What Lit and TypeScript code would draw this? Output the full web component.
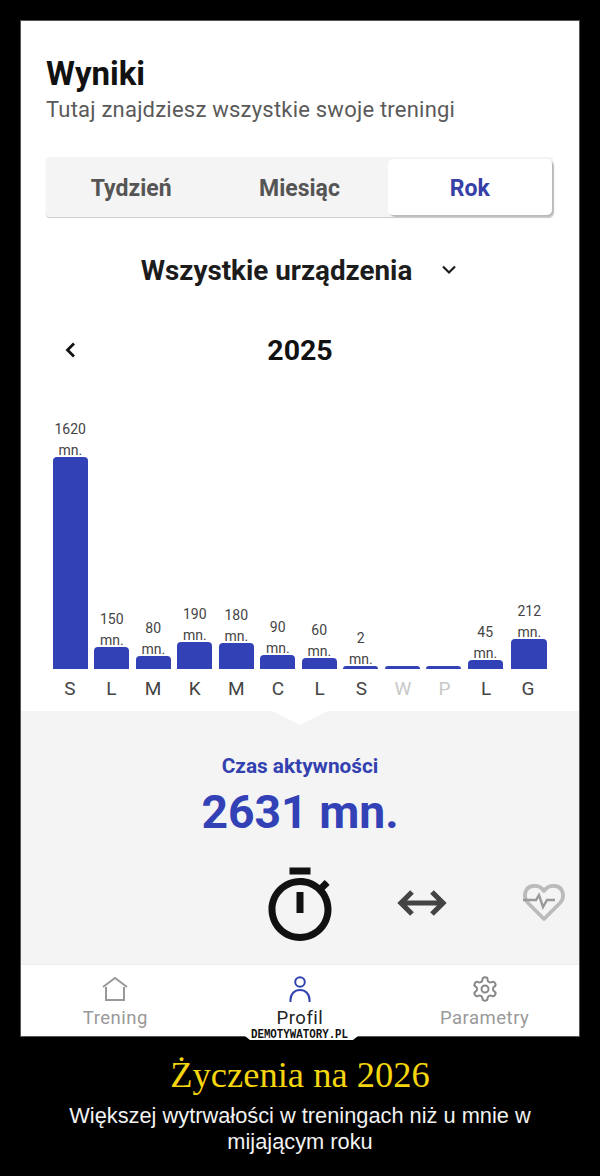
import { LitElement, html, css } from "lit";
import { customElement } from "lit/decorators.js";

const bars = [
  { d: "S", v: "1620", h: 212 },
  { d: "L", v: "150", h: 22 },
  { d: "M", v: "80", h: 13 },
  { d: "K", v: "190", h: 27 },
  { d: "M", v: "180", h: 26 },
  { d: "C", v: "90", h: 14 },
  { d: "L", v: "60", h: 11 },
  { d: "S", v: "2", h: 3 },
  { d: "W", v: "", h: 3, off: true },
  { d: "P", v: "", h: 3, off: true },
  { d: "L", v: "45", h: 9 },
  { d: "G", v: "212", h: 30 },
];

@customElement("app-root")
export class AppRoot extends LitElement {
  static styles = css`
    :host { display: block; width: 600px; height: 1176px; background: #000; font-family: Roboto, sans-serif; overflow: hidden; }
    .frame { position: relative; box-sizing: border-box; margin: 20px 20px 0; width: 560px; height: 1017px; border: 1px solid #555; background: #fff; display: flex; flex-direction: column; }
    .head { padding: 35px 0 0 25px; }
    h1 { margin: 0; font-size: 33px; line-height: 36px; font-weight: 700; color: #111; }
    .sub { font-size: 22px; line-height: 28px; margin-top: 4px; color: #5a5a5a; letter-spacing: 0.22px; }
    .tabs { margin: 33px 26px 0 25px; height: 60px; flex-shrink: 0; background: #f4f4f4; border-radius: 4px; box-shadow: 0 1px 1px #ccc; display: grid; grid-template-columns: repeat(3, 1fr); align-items: stretch; box-sizing: border-box; padding: 2px 1px 2px 1px; }
    .tab { display: flex; align-items: center; justify-content: center; padding-top: 2px; font-size: 23px; font-weight: 700; color: #555; border-radius: 5px; }
    .tab.on { margin-left: 4px; background: #fff; color: #3540a8; box-shadow: 2px 2px 1px #bbb; }
    .device { display: flex; justify-content: center; align-items: center; gap: 27px; margin-top: 33px; height: 40px; font-size: 27.8px; font-weight: 700; color: #1c1c1c; }
    .year { display: grid; grid-template-columns: 1fr auto 1fr; align-items: center; height: 40px; margin-top: 40px; padding: 0 42px; font-size: 28.5px; font-weight: 700; color: #111; }
    .chart { display: grid; grid-template-columns: repeat(12, 41.5px); margin: 47px 0 0 28.5px; height: 252px; flex-shrink: 0; align-items: end; }
    .col { display: flex; flex-direction: column; align-items: center; }
    .col:last-child { margin-left: 5px; }
    .col:last-child .bar { width: 36px; }
    .val { font-size: 14px; line-height: 20.5px; color: #444; text-align: center; margin-bottom: -3px; }
    .bar { width: 35px; background: #3341b7; border-radius: 4px 4px 0 0; }
    .days { display: grid; grid-template-columns: repeat(12, 41.65px); margin: 9px 0 0 28px; font-size: 19px; line-height: 22px; color: #444; text-align: center; }
    .days .off { color: #c8c8c8; }
    .panel { position: relative; flex-shrink: 0; margin-top: 11px; height: 254px; background: #f4f4f4; display: flex; flex-direction: column; align-items: center; }
    .notch { position: absolute; top: 0; left: 251px; width: 0; height: 0; border-left: 28px solid transparent; border-right: 28px solid transparent; border-top: 14px solid #fff; }
    .lbl { margin-top: 42px; font-size: 20.8px; line-height: 26px; font-weight: 700; color: #3341b0; }
    .big { margin-top: 5px; font-size: 46.3px; line-height: 56px; font-weight: 700; color: #3341b7; }
    .icons { align-self: flex-start; display: grid; grid-template-columns: repeat(3, 122px); align-items: center; justify-items: center; margin: 24px 0 0 218px; }
    .icons svg { display: block; }
    .icons .side { margin-bottom: 6px; }
    nav { flex: 1; display: grid; grid-template-columns: repeat(3, 1fr); padding: 0 2px; background: #fff; box-shadow: 0 -1px 0 #eee; position: relative; }
    .item { display: flex; flex-direction: column; align-items: center; padding-top: 10px; font-size: 18.5px; line-height: 24px; color: #999; letter-spacing: 0.5px; }
    .item svg { display: block; margin-bottom: 3px; }
    .item.on { color: #222; }
    .mark { position: absolute; left: 224px; bottom: -4px; width: 113px; height: 12px; padding: 1px 3px 0 0; box-sizing: border-box; display: flex; justify-content: center; background: #fff; color: #111; font: 700 13px/11px "Liberation Mono", monospace; white-space: nowrap; clip-path: polygon(0 0, 100% 0, 100% 8px, calc(100% - 5px) 100%, 5px 100%, 0 8px); }
    .mark span { flex: none; transform: scaleX(0.83); }
    .cap { text-align: center; color: #fff; }
    .cap h2 { margin: 16px 0 0; font: 400 36.5px/44px "Liberation Serif", serif; color: #f5d50f; }
    .cap p { margin: 6px auto 0; width: 480px; font: 400 21.8px/26px "Liberation Sans", sans-serif; color: #f2f2f2; }
  `;

  render() {
    return html`
      <div class="frame">
        <div class="head">
          <h1>Wyniki</h1>
          <div class="sub">Tutaj znajdziesz wszystkie swoje treningi</div>
        </div>
        <div class="tabs">
          <div class="tab">Tydzień</div>
          <div class="tab">Miesiąc</div>
          <div class="tab on">Rok</div>
        </div>
        <div class="device">
          <span>Wszystkie urządzenia</span>
          <svg width="20" height="12" viewBox="0 0 20 12"><path d="M4 2.5l6 6 6-6" fill="none" stroke="#1c1c1c" stroke-width="2.2"/></svg>
        </div>
        <div class="year">
          <svg width="14" height="18" viewBox="0 0 14 18"><path d="M11 2.5L4.5 9l6.5 6.5" fill="none" stroke="#111" stroke-width="2.8"/></svg>
          <span>2025</span>
          <span></span>
        </div>
        <div class="chart">
          ${bars.map(
            (b) => html`<div class="col">
              ${b.v ? html`<div class="val">${b.v}<br />mn.</div>` : ""}
              <div class="bar" style="height:${b.h}px"></div>
            </div>`
          )}
        </div>
        <div class="days">
          ${bars.map((b) => html`<span class=${b.off ? "off" : ""}>${b.d}</span>`)}
        </div>
        <div class="panel">
          <div class="notch"></div>
          <div class="lbl">Czas aktywności</div>
          <div class="big">2631 mn.</div>
          <div class="icons">
            <svg width="84" height="84" viewBox="0 0 24 24"><path fill="#111" d="M15 1H9v2h6V1zm-4 13h2V8h-2v6zm8.03-6.61l1.42-1.42c-.43-.51-.9-.99-1.41-1.41l-1.42 1.42C16.07 4.74 14.12 4 12 4c-4.97 0-9 4.03-9 9s4.02 9 9 9 9-4.03 9-9c0-2.12-.74-4.07-1.97-5.61zM12 20c-3.87 0-7-3.13-7-7s3.13-7 7-7 7 3.13 7 7-3.13 7-7 7z"/></svg>
            <svg class="side" width="50" height="28" viewBox="0 0 50 28"><path d="M3 14h44M15 3L4 14l11 11M35 3l11 11-11 11" fill="none" stroke="#444" stroke-width="5.2"/></svg>
            <svg class="side" width="44" height="40" viewBox="0 0 44 40"><path d="M22 36L6 20C1 15 2 4 11 3c5-.5 9 2 11 5 2-3 6-5.500 11-5 9 1 10 12 5 17z" fill="none" stroke="#bbb" stroke-width="3.800" stroke-linejoin="round"/><path d="M1 17h13l3-5 4 12 4-7h8" fill="none" stroke="#999" stroke-width="2.400"/></svg>
          </div>
        </div>
        <nav>
          <div class="item">
            <svg width="28" height="28" viewBox="0 0 28 28"><path d="M2 12L14 3l12 9M5 12v13h18V12" fill="none" stroke="#999" stroke-width="2"/></svg>
            Trening
          </div>
          <div class="item on">
            <svg width="28" height="28" viewBox="0 0 28 28"><circle cx="14" cy="7" r="4.8" fill="none" stroke="#3341b0" stroke-width="2"/><path d="M4.500 27v-2c0-6 4-10 9.500-10s9.500 4 9.500 10v2" fill="none" stroke="#3341b0" stroke-width="2"/></svg>
            Profil
          </div>
          <div class="item">
            <svg width="28" height="28" viewBox="0 0 24 24" fill="none" stroke="#888" stroke-width="1.7" stroke-linecap="round" stroke-linejoin="round"><circle cx="12" cy="12" r="3"/><path d="M12.220 2h-.44a2 2 0 0 0-2 2v.18a2 2 0 0 1-1 1.730l-.43.250a2 2 0 0 1-2 0l-.15-.08a2 2 0 0 0-2.730.730l-.22.380a2 2 0 0 0 .730 2.730l.15.100a2 2 0 0 1 1 1.720v.510a2 2 0 0 1-1 1.740l-.15.090a2 2 0 0 0-.730 2.730l.22.380a2 2 0 0 0 2.730.730l.15-.08a2 2 0 0 1 2 0l.43.250a2 2 0 0 1 1 1.730V20a2 2 0 0 0 2 2h.44a2 2 0 0 0 2-2v-.18a2 2 0 0 1 1-1.730l.43-.250a2 2 0 0 1 2 0l.15.080a2 2 0 0 0 2.730-.730l.22-.390a2 2 0 0 0-.730-2.730l-.15-.080a2 2 0 0 1-1-1.740v-.500a2 2 0 0 1 1-1.740l.15-.090a2 2 0 0 0 .730-2.730l-.22-.380a2 2 0 0 0-2.730-.730l-.15.080a2 2 0 0 1-2 0l-.43-.250a2 2 0 0 1-1-1.730V4a2 2 0 0 0-2-2z"/></svg>
            Parametry
          </div>
        </nav>
        <div class="mark"><span>DEMOTYWATORY.PL</span></div>
      </div>
      <div class="cap">
        <h2>Życzenia na 2026</h2>
        <p>Większej wytrwałości w treningach niż u mnie w mijającym roku</p>
      </div>
    `;
  }
}
